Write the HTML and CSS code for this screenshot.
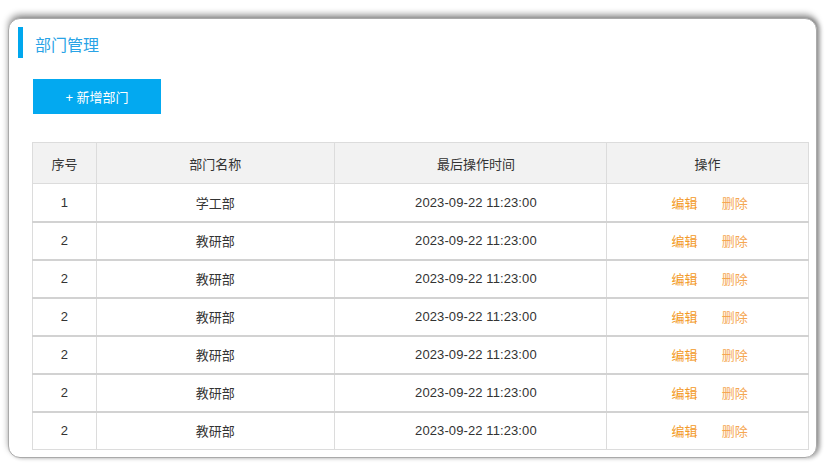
FILE: index.html
```html
<!DOCTYPE html>
<html>
<head>
    <meta charset="utf-8">
    <meta name="viewport" content="width=device-width, initial-scale=1.0">
    <title>部门管理</title>
    <link rel="stylesheet" href="styles.css">
</head>
<body>
    <div class="card">
        <div class="title">
            <span class="title-bar"></span>
            <h2>部门管理</h2>
        </div>
        <div class="toolbar">
            <button class="btn-add">+ 新增部门</button>
        </div>
        <table class="dept-table">
            <thead>
                <tr>
                    <th class="col-no">序号</th>
                    <th class="col-name">部门名称</th>
                    <th class="col-time">最后操作时间</th>
                    <th class="col-op">操作</th>
                </tr>
            </thead>
            <tbody>
                <tr><td>1</td><td>学工部</td><td>2023-09-22 11:23:00</td><td><a class="edit">编辑</a><a class="del">删除</a></td></tr>
                <tr><td>2</td><td>教研部</td><td>2023-09-22 11:23:00</td><td><a class="edit">编辑</a><a class="del">删除</a></td></tr>
                <tr><td>2</td><td>教研部</td><td>2023-09-22 11:23:00</td><td><a class="edit">编辑</a><a class="del">删除</a></td></tr>
                <tr><td>2</td><td>教研部</td><td>2023-09-22 11:23:00</td><td><a class="edit">编辑</a><a class="del">删除</a></td></tr>
                <tr><td>2</td><td>教研部</td><td>2023-09-22 11:23:00</td><td><a class="edit">编辑</a><a class="del">删除</a></td></tr>
                <tr><td>2</td><td>教研部</td><td>2023-09-22 11:23:00</td><td><a class="edit">编辑</a><a class="del">删除</a></td></tr>
                <tr><td>2</td><td>教研部</td><td>2023-09-22 11:23:00</td><td><a class="edit">编辑</a><a class="del">删除</a></td></tr>
            </tbody>
        </table>
    </div>
</body>
</html>
```

FILE: styles.css
```css
* {
    box-sizing: border-box;
}
body {
    margin: 0;
    padding: 18px 8px 6px 8px;
    background: #fff;
    font-family: "Liberation Sans", "Noto Sans CJK SC", sans-serif;
    font-size: 13px;
    color: #333;
}
.card {
    width: 809px;
    height: 440px;
    background: #fff;
    border: 1px solid #aaa;
    border-radius: 12px;
    box-shadow: 0 -4px 6px rgba(0, 0, 0, 0.35), 3px 0 4px rgba(0, 0, 0, 0.3);
    padding: 8px 7px 0 23px;
}
.title {
    display: flex;
    align-items: center;
    margin-left: -14px;
    height: 31px;
}
.title-bar {
    width: 5px;
    height: 31px;
    background: #00a7ee;
}
.title h2 {
    margin: 0 0 0 12px;
    padding-top: 3px;
    font-size: 16px;
    font-weight: normal;
    color: #29a3e6;
}
.toolbar {
    padding: 21px 0 28px 1px;
}
.btn-add {
    width: 128px;
    height: 35px;
    border: none;
    background: #03a9f0;
    color: #fff;
    font-family: inherit;
    font-size: 13px;
}
.dept-table {
    width: 777px;
    border-collapse: collapse;
    text-align: center;
}
.dept-table th,
.dept-table td {
    border: 1px solid #dcdcdc;
    font-weight: normal;
}
.dept-table th {
    height: 41px;
    background: #f2f2f2;
}
.dept-table td {
    height: 38px;
}
.dept-table th:nth-child(3),
.dept-table td:nth-child(3) {
    padding-left: 12px;
}
.dept-table td:nth-child(3) {
    letter-spacing: 0.1px;
}
.dept-table tbody tr {
    border-bottom: 2px solid #d2d2d2;
}
.dept-table tbody tr:last-child {
    border-bottom: 1px solid #dcdcdc;
}
.col-no { width: 64px; }
.col-name { width: 238px; }
.col-time { width: 273px; }
.col-op { width: 202px; }
.edit,
.del {
    margin: 0 12px;
    cursor: pointer;
}
.edit {
    margin-left: 16px;
    color: #f39a26;
}
.del {
    color: #f5a752;
}
```
